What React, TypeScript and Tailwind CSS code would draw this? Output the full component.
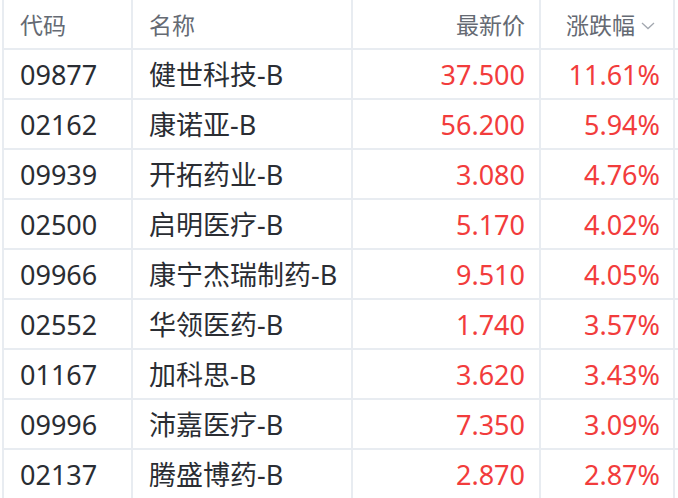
import React from "react";

interface StockRow {
  code: string;
  name: string;
  price: string;
  change: string;
}

const rows: StockRow[] = [
  { code: "09877", name: "健世科技-B", price: "37.500", change: "11.61%" },
  { code: "02162", name: "康诺亚-B", price: "56.200", change: "5.94%" },
  { code: "09939", name: "开拓药业-B", price: "3.080", change: "4.76%" },
  { code: "02500", name: "启明医疗-B", price: "5.170", change: "4.02%" },
  { code: "09966", name: "康宁杰瑞制药-B", price: "9.510", change: "4.05%" },
  { code: "02552", name: "华领医药-B", price: "1.740", change: "3.57%" },
  { code: "01167", name: "加科思-B", price: "3.620", change: "3.43%" },
  { code: "09996", name: "沛嘉医疗-B", price: "7.350", change: "3.09%" },
  { code: "02137", name: "腾盛博药-B", price: "2.870", change: "2.87%" },
];

const gridCols = "grid grid-cols-[129px_220px_188px_136px]";

const App = () => {
  return (
    <div
      className="w-[678px] h-[498px] overflow-hidden bg-white pl-[2px]"
      style={{ fontFamily: '"Noto Sans", "Noto Sans CJK SC", sans-serif' }}
    >
      {/* header */}
      <div className={`${gridCols} h-[50px] border-b-2 border-[#e8ecf1] text-[23px] text-[#656a73]`}>
        <div className="flex items-center pl-[16px] pt-[2px] border-l-2 border-[#e8ecf1]">代码</div>
        <div className="flex items-center pl-[16px] pt-[2px] border-l-2 border-[#e8ecf1]">名称</div>
        <div className="flex items-center justify-end pr-[14px] pt-[2px] border-l-2 border-[#e8ecf1]">最新价</div>
        <div className="flex items-center justify-end pr-[17px] pt-[2px] border-l-2 border-r-2 border-[#e8ecf1]">
          涨跌幅
          <svg width="16" height="10" viewBox="0 0 16 10" className="ml-[5px] mt-[2px]">
            <path d="M2 2 L8 7.5 L14 2" fill="none" stroke="#a3a8b0" strokeWidth="1.3" />
          </svg>
        </div>
      </div>

      {rows.map((r) => (
        <div
          key={r.code}
          className={`${gridCols} h-[50px] border-b-2 border-[#e8ecf1] text-[27px]`}
        >
          <div className="flex items-center pl-[16px] pt-[2px] border-l-2 border-[#e8ecf1] text-[#2a2d33]">{r.code}</div>
          <div className="flex items-center pl-[16px] pt-[2px] border-l-2 border-[#e8ecf1] text-[#2a2d33] whitespace-nowrap">{r.name}</div>
          <div className="flex items-center justify-end pr-[14px] pt-[2px] border-l-2 border-[#e8ecf1] text-[#f23c3c]">{r.price}</div>
          <div className="flex items-center justify-end pr-[13px] pt-[2px] border-l-2 border-r-2 border-[#e8ecf1] text-[#f23c3c]">{r.change}</div>
        </div>
      ))}
    </div>
  );
};

export default App;
